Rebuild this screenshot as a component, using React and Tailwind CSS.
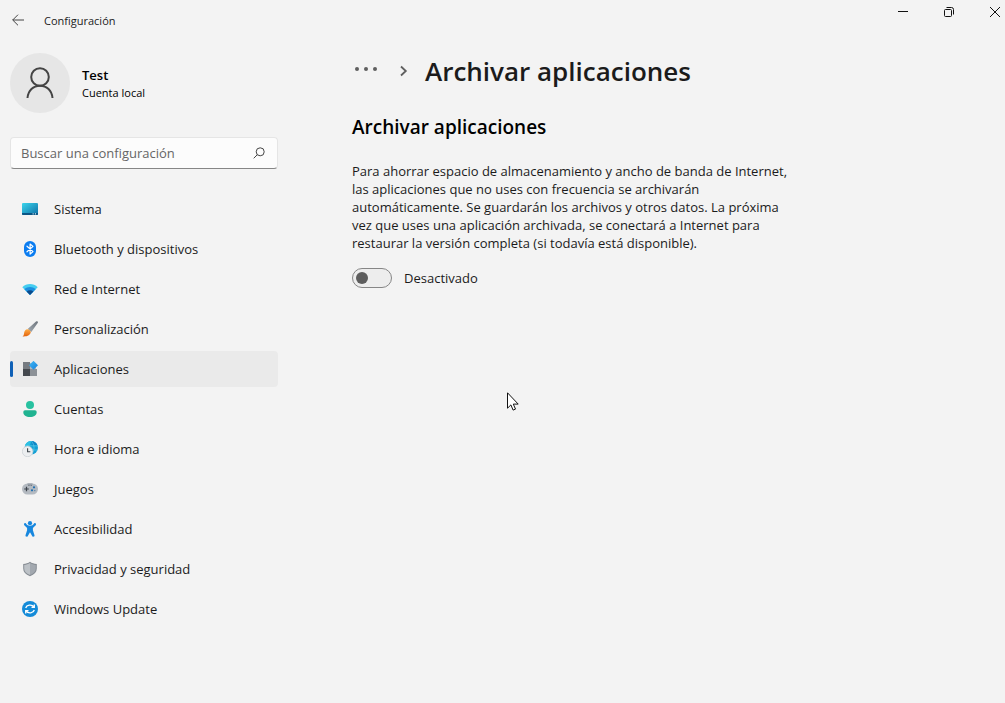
import { useState } from 'react'
import clsx from 'clsx'

function SystemIcon() {
  return (
    <svg viewBox="0 0 16 16" className="size-4">
      <defs>
        <linearGradient id="system" x1="0" y1="0" x2="1" y2="1">
          <stop offset="0" stopColor="#3bd5ec" />
          <stop offset="1" stopColor="#0d6fa6" />
        </linearGradient>
      </defs>
      <rect x="0" y="2" width="16" height="12" rx="1" fill="url(#system)" />
      <path d="M0 12h16v1a1 1 0 0 1-1 1H1a1 1 0 0 1-1-1z" fill="#0b5584" />
      <path d="M10.600 12.300h1.100v1.100h-1.100zM12.900 12.300H14v1.100h-1.100z" fill="#c5eefa" />
    </svg>
  )
}

function BluetoothIcon() {
  return (
    <svg viewBox="0 0 16 16" className="size-4">
      <rect x="2" y="0" width="12" height="16" rx="6" fill="#0a7cf0" />
      <path d="M5 5.200l6 5.400L8.100 13V3L11 5.400 5 10.800" fill="none" stroke="#fff" strokeWidth="1.200" strokeLinejoin="round" strokeLinecap="round" />
    </svg>
  )
}

function NetworkIcon() {
  return (
    <svg viewBox="0 0 16 16" className="size-4">
      <path d="M.3 6.200C4.400 1.900 11.600 1.900 15.700 6.200L8 14z" fill="#45cdf0" />
      <path d="M2.300 8.200c3.200-3 8.200-3 11.400 0L8 14z" fill="#1c8fe0" />
      <path d="M4.600 10.500c2-1.700 4.800-1.700 6.800 0L8 14z" fill="#0b4a8b" />
    </svg>
  )
}

function BrushIcon() {
  return (
    <svg viewBox="0 0 16 16" className="size-4">
      <defs>
        <linearGradient id="handle" x1="1" y1="0" x2="0" y2="1">
          <stop offset="0" stopColor="#6c747c" />
          <stop offset="1" stopColor="#a3abb2" />
        </linearGradient>
        <linearGradient id="bristle" x1="0" y1="0" x2="0" y2="1">
          <stop offset="0" stopColor="#ffad45" />
          <stop offset="1" stopColor="#e2620c" />
        </linearGradient>
      </defs>
      <path d="M15.600.4c.5.5.4 1.200.1 1.700L9.300 11 5.700 7.900 14 .5c.5-.4 1.200-.5 1.600-.1z" fill="url(#handle)" />
      <path d="M5.500 8.200c1.500.1 2.900 1.300 3.300 2.800C8.500 14 5.500 15.700.5 15.400c1.600-.9 1.300-2.300 1.700-4C2.600 9.500 3.800 8.100 5.500 8.200z" fill="url(#bristle)" />
    </svg>
  )
}

function AppsIcon() {
  return (
    <svg viewBox="0 0 16 16" className="size-4">
      <defs>
        <linearGradient id="tile" x1="0" y1="0" x2="1" y2="1">
          <stop offset="0" stopColor="#41b9f5" />
          <stop offset="1" stopColor="#1580dc" />
        </linearGradient>
      </defs>
      <path d="M1 1h7v7H1z" fill="#767b81" />
      <path d="M1 8h7v7H1z" fill="#45494f" />
      <path d="M8 8h7v7H8z" fill="#8c9197" />
      <path d="M8 2h2l4 4v2H8z" fill="#b1b8bf" />
      <path d="M11.500-.2L16 4.300l-4.500 4.500L7 4.300z" fill="url(#tile)" />
    </svg>
  )
}

function AccountsIcon() {
  return (
    <svg viewBox="0 0 16 16" className="size-4">
      <circle cx="8" cy="4" r="4" fill="#28c1a0" />
      <path d="M3 9.300h10a1.700 1.700 0 0 1 1.700 1.700c0 3.200-2.700 5-6.700 5s-6.700-1.800-6.700-5A1.700 1.700 0 0 1 3 9.300z" fill="#20b391" />
    </svg>
  )
}

function TimeIcon() {
  return (
    <svg viewBox="0 0 16 16" className="size-4">
      <circle cx="9.300" cy="6.700" r="6.700" fill="#149fd4" />
      <path d="M9.300 0C6 0 3.600 2 2.800 5h4.500L9.300 0z" fill="#2dc0e2" />
      <path d="M9.300 0a6.700 6.700 0 0 1 6.200 4.400H10z" fill="#0f86c6" />
      <path d="M3 4.800h12.600M9.300 0c3.600 4 3.600 9 0 13.400M11 9h4.500" fill="none" stroke="#5fd3ef" strokeWidth=".6" />
      <circle cx="5.600" cy="10.400" r="5.300" fill="#eceef0" stroke="#c3c9ce" strokeWidth=".6" />
      <path d="M5.600 7.200v3.500h2.700" fill="none" stroke="#3e454b" strokeWidth="1.100" />
    </svg>
  )
}

function GamesIcon() {
  return (
    <svg viewBox="0 0 16 16" className="size-4">
      <rect x="0" y="2.500" width="16" height="11" rx="5.500" fill="#b4bac1" />
      <path d="M5.500 2.500h5v1.200h-5z" fill="#8c949e" />
      <path d="M4.500 5.700v4.600M2.200 8h4.600" stroke="#3b424a" strokeWidth="1.200" />
      <path d="M6.500 4.500h.9M8.700 4.500h.9" stroke="#4a525b" />
      <circle cx="12" cy="6.300" r="1.100" fill="#1c6db0" />
      <circle cx="10" cy="9.300" r="1.100" fill="#1c6db0" />
      <circle cx="12.800" cy="9.600" r=".7" fill="#4c7da8" />
    </svg>
  )
}

function AccessibilityIcon() {
  return (
    <svg viewBox="0 0 16 16" className="size-4">
      <circle cx="8" cy="2.200" r="2.100" fill="#1787de" />
      <path d="M2.300 2.500c.5-.6 1.200-.4 1.600 0C5 4 6.200 4.700 8 4.700S11 4 12.100 2.500c.4-.4 1.100-.6 1.600 0 .5.500.4 1.200 0 1.700L10.900 7v2.300l1.600 5c.3 1.400-1.500 2.100-2.200.9L8 11.300l-2.300 3.900c-.7 1.200-2.500.5-2.200-.9l1.600-5V7L2.300 4.200c-.4-.5-.5-1.200 0-1.700z" fill="#1787de" />
    </svg>
  )
}

function PrivacyIcon() {
  return (
    <svg viewBox="0 0 16 16" className="size-4">
      <path d="M8 .8C9.800 2.200 12 2.900 14.800 3v4.500c0 3.500-2.300 6-6.800 7.700-4.500-1.700-6.800-4.200-6.800-7.700V3C4 2.900 6.200 2.200 8 .8z" fill="#868c93" />
      <path d="M8 2c1.700 1.200 3.600 1.800 5.800 2v3.500c0 2.900-1.900 5-5.800 6.600z" fill="#a2a8af" />
      <path d="M8 2v12.100c-3.900-1.600-5.800-3.700-5.800-6.600V4C4.400 3.800 6.300 3.200 8 2z" fill="#bcc1c6" />
    </svg>
  )
}

function UpdateIcon() {
  return (
    <svg viewBox="0 0 16 16" className="size-4">
      <circle cx="8" cy="8" r="8" fill="#148bd8" />
      <path d="M3.700 7C4.500 4 9.500 2.800 12 6M12.300 3.500V6.300H9.500M12.300 9C11.500 12 6.500 13.200 4 10M3.700 12.500V9.700h2.800" fill="none" stroke="#fff" strokeWidth="1.300" />
    </svg>
  )
}

const NAV = [
  { label: 'Sistema', Icon: SystemIcon },
  { label: 'Bluetooth y dispositivos', Icon: BluetoothIcon },
  { label: 'Red e Internet', Icon: NetworkIcon },
  { label: 'Personalización', Icon: BrushIcon },
  { label: 'Aplicaciones', Icon: AppsIcon },
  { label: 'Cuentas', Icon: AccountsIcon },
  { label: 'Hora e idioma', Icon: TimeIcon },
  { label: 'Juegos', Icon: GamesIcon },
  { label: 'Accesibilidad', Icon: AccessibilityIcon },
  { label: 'Privacidad y seguridad', Icon: PrivacyIcon },
  { label: 'Windows Update', Icon: UpdateIcon },
]

function TitleBar() {
  return (
    <header className="flex h-10 items-start justify-between">
      <div className="flex h-10 items-center">
        <button aria-label="Atrás" className="flex h-10 w-11 items-center pl-3">
          <svg viewBox="0 0 12 12" className="size-3" fill="none" stroke="#444">
            <path d="M12 6H.7M6 .7L.7 6 6 11.300" />
          </svg>
        </button>
        <span className="pt-0.5 text-[11px]">Configuración</span>
      </div>
      <div className="flex h-6">
        <button aria-label="Minimizar" className="flex w-[46px] items-center justify-center">
          <svg viewBox="0 0 10 10" className="size-[10px]" stroke="#111"><path d="M0 4.500h10" /></svg>
        </button>
        <button aria-label="Restaurar" className="flex w-[46px] items-center justify-center">
          <svg viewBox="0 0 10 10" className="size-[10px]" fill="none" stroke="#111">
            <rect x=".5" y="2.500" width="7" height="7" rx="1" />
            <path d="M2.500.5H7.500a2 2 0 0 1 2 2v5" />
          </svg>
        </button>
        <button aria-label="Cerrar" className="flex w-[33px] items-center justify-start pl-[18px]">
          <svg viewBox="0 0 10 10" className="size-[10px]" fill="none" stroke="#111"><path d="M0 0l10 10M10 0L0 10" /></svg>
        </button>
      </div>
    </header>
  )
}

function Sidebar() {
  const [active, setActive] = useState('Aplicaciones')

  return (
    <aside className="w-[268px] shrink-0 pt-[13px]">
      <div className="flex items-center gap-3">
        <div className="flex size-[60px] items-center justify-center rounded-full bg-[#e6e6e6]">
          <svg viewBox="0 0 28 32" className="h-8 w-7" fill="none" stroke="#444" strokeWidth="2">
            <circle cx="14" cy="10" r="8.800" />
            <path d="M1.500 31C2.200 23.500 7.200 18.800 14 18.800S25.800 23.500 26.500 31" />
          </svg>
        </div>
        <div className="pt-0.5 text-black">
          <p className="text-[13px] leading-[18px] font-semibold">Test</p>
          <p className="text-[11px] leading-[18px]">Cuenta local</p>
        </div>
      </div>

      <div className="mt-6 flex h-8 items-center rounded border border-[#e5e5e5] border-b-[#868686] bg-[#fcfcfc] pr-3 pl-[10px]">
        <input
          type="text"
          aria-label="Buscar una configuración"
          placeholder="Buscar una configuración"
          className="min-w-0 flex-1 bg-transparent pt-0.5 text-[13px] outline-none placeholder:text-[#666]"
        />
        <svg viewBox="0 0 12 12" className="size-3" fill="none" stroke="#444">
          <circle cx="7.200" cy="4.800" r="4" />
          <path d="M4.300 7.700L.7 11.300" />
        </svg>
      </div>

      <nav className="mt-[22px] flex flex-col gap-1">
        {NAV.map(({ label, Icon }) => (
          <a
            key={label}
            href="#"
            onClick={() => setActive(label)}
            className={clsx('flex h-9 items-center rounded', active === label && 'bg-[#eaeaea]')}
          >
            <span className={clsx('h-4 w-[3px] rounded-full', active === label && 'bg-[#0f60b6]')} />
            <span className="mr-4 ml-[9px]"><Icon /></span>
            <span className="pt-0.5 text-[13px] whitespace-nowrap">{label}</span>
          </a>
        ))}
      </nav>
    </aside>
  )
}

export default function App() {
  const [archive, setArchive] = useState(false)

  return (
    <div className="relative min-h-screen overflow-hidden bg-[#f3f3f3] font-['Open_Sans',sans-serif] text-[#1b1b1b]">
      <TitleBar />
      <div className="flex gap-[74px] pl-[10px]">
        <Sidebar />
        <main className="min-w-0 flex-1 pt-3">
          <div className="flex items-center">
            <button aria-label="Más" className="ml-[3px] flex h-8 w-[45px] items-center">
              <svg viewBox="0 0 24 8" className="h-2 w-6" fill="#5f5f5f">
                <circle cx="2" cy="2" r="2" /><circle cx="11" cy="2" r="2" /><circle cx="20" cy="2" r="2" />
              </svg>
            </button>
            <svg viewBox="0 0 8 12" className="h-3 w-2" fill="none" stroke="#5f5f5f" strokeWidth="1.800">
              <path d="M1 1.500L5.800 6 1 10.500" />
            </svg>
            <h1 className="ml-[17px] text-[26px] leading-[38px] font-semibold">Archivar aplicaciones</h1>
          </div>

          <h2 className="mt-6 text-[19px] leading-[26px] font-semibold text-black">Archivar aplicaciones</h2>
          <p className="mt-[22px] text-[13px] leading-[18px]">
            Para ahorrar espacio de almacenamiento y ancho de banda de Internet,<br />
            las aplicaciones que no uses con frecuencia se archivarán<br />
            automáticamente. Se guardarán los archivos y otros datos. La próxima<br />
            vez que uses una aplicación archivada, se conectará a Internet para<br />
            restaurar la versión completa (si todavía está disponible).
          </p>

          <label className="mt-[15px] inline-flex items-center gap-3 text-[13px]">
            <input
              type="checkbox"
              role="switch"
              checked={archive}
              onChange={(e) => setArchive(e.target.checked)}
              className="h-5 w-10 appearance-none rounded-full border border-[#868686] bg-[#ededed] p-[3px] before:block before:size-3 before:rounded-full before:bg-[#5d5d5d] checked:bg-[#0f60b6] checked:before:ml-5 checked:before:bg-white"
            />
            <span className="pt-0.5">{archive ? 'Activado' : 'Desactivado'}</span>
          </label>
        </main>
      </div>

      {/* Mouse pointer */}
      <svg viewBox="0 0 12 19" className="pointer-events-none absolute top-[392px] left-[507px] h-[19px] w-3" fill="#fff" stroke="#111">
        <path d="M.5.8v15.400l3.400-3.300 2.200 5.200 2.400-1-2.200-5h4.900z" />
      </svg>
    </div>
  )
}
